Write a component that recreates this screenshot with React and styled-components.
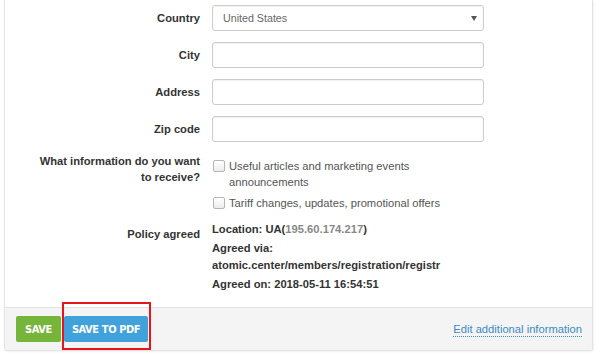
import styled, { createGlobalStyle } from 'styled-components';

const GlobalStyle = createGlobalStyle`
    body {
        margin: 0;
        background: #fff;
        font-family: "Liberation Sans", Arial, sans-serif;
        font-size: 11.2px;
        color: #333;
    }
`

export default function App() {
    return (
        <>
            <GlobalStyle />
            <Card>
                <Form>
                    <Row>
                        <Label>Country</Label>
                        <SelectBox>
                            <span>United States</span>
                            <Caret />
                        </SelectBox>
                    </Row>
                    <Row>
                        <Label>City</Label>
                        <Input />
                    </Row>
                    <Row>
                        <Label>Address</Label>
                        <Input />
                    </Row>
                    <Row>
                        <Label>Zip code</Label>
                        <Input />
                    </Row>

                    <Row top="3px">
                        <Label multi>What information do you want<br />to receive?</Label>
                        <Options>
                            <Option>
                                <Check />
                                <OptionText>Useful articles and marketing events announcements</OptionText>
                            </Option>
                            <Option>
                                <Check />
                                <OptionText>Tariff changes, updates, promotional offers</OptionText>
                            </Option>
                        </Options>
                    </Row>

                    <Row top="-1px">
                        <Label>Policy agreed</Label>
                        <Policy>
                            <p>Location: UA(<Ip>195.60.174.217</Ip>)</p>
                            <p>Agreed via:<br />atomic.center/members/registration/registr</p>
                            <p>Agreed on: 2018-05-11 16:54:51</p>
                        </Policy>
                    </Row>
                </Form>

                <Footer>
                    <Buttons>
                        <Button color="#76b43a">Save</Button>
                        <Highlight>
                            <Button color="#41a1da">Save to PDF</Button>
                        </Highlight>
                    </Buttons>
                    <EditLink href="#">Edit additional information</EditLink>
                </Footer>
            </Card>
        </>
    )
}

const Card = styled.div`
    margin: 0 7px 6px 4px;
    border: 1px solid #e3e3e3;
    border-top: none;
    border-radius: 0 0 3px 3px;
    box-shadow: 1px 1px 2px rgba(0, 0, 0, 0.06);
    background: #fff;
`

const Form = styled.div`
    display: flex;
    flex-direction: column;
    gap: 11px;
    padding: 5px 0 12px 0;
`

const Row = styled.div`
    display: grid;
    grid-template-columns: 195px 272px;
    column-gap: 12px;
    align-items: start;
    margin-top: ${(p) => p.top || 0};
`

const Label = styled.label`
    font-weight: bold;
    font-size: 11.2px;
    color: #333;
    text-align: right;
    line-height: ${(p) => (p.multi ? '16px' : '26px')};
    margin-top: ${(p) => (p.multi ? '-3px' : '0')};
    white-space: nowrap;
`

const Input = styled.div`
    height: 24px;
    border: 1px solid #ccc;
    border-radius: 3px;
    box-shadow: inset 0 1px 1px rgba(0, 0, 0, 0.06);
    background: #fff;
`

const SelectBox = styled(Input)`
    display: flex;
    align-items: center;
    justify-content: space-between;
    padding: 0 6px 0 10px;
    font-size: 10.7px;
    color: #666;
`

const Caret = styled.span`
    width: 0;
    height: 0;
    border-left: 3px solid transparent;
    border-right: 3px solid transparent;
    border-top: 5px solid #555;
`

const Options = styled.div`
    display: flex;
    flex-direction: column;
    gap: 3px;
`

const Option = styled.div`
    display: flex;
    align-items: flex-start;
    gap: 4px;
    font-size: 11.2px;
    color: #555;
    line-height: 16px;
    padding-top: 2px;
`

const OptionText = styled.span`
    width: 240px;
`

const Check = styled.div`
    flex: none;
    width: 10px;
    height: 10px;
    margin: 2px 0 0 1px;
    border: 1px solid #b5b5b5;
    border-radius: 2px;
    background: linear-gradient(#fff, #ececec);
`

const Policy = styled.div`
    font-weight: bold;
    font-size: 11.2px;
    color: #333;
    line-height: 17px;
    overflow: hidden;
    white-space: nowrap;

    p {
        margin: 0 0 2px 0;
    }
`

const Ip = styled.span`
    color: #888;
`

const Footer = styled.div`
    display: flex;
    align-items: center;
    justify-content: space-between;
    height: 42px;
    padding: 0 10px 0 11px;
    background: #f4f4f4;
    border-top: 1px solid #e3e3e3;
`

const Buttons = styled.div`
    display: flex;
    align-items: center;
    gap: 3px;
`

const Highlight = styled.div`
    position: relative;

    &::after {
        content: '';
        position: absolute;
        left: -2px;
        right: -3px;
        top: -14px;
        bottom: -8px;
        border: 2px solid #e8141c;
        pointer-events: none;
    }
`

const Button = styled.button`
    display: block;
    height: 26px;
    padding: 0 ${(p) => (p.children === 'Save' ? '9px' : '8px')};
    border: none;
    border-radius: 2px;
    background: ${(p) => p.color};
    color: #fff;
    font-family: "DejaVu Sans", sans-serif;
    font-stretch: condensed;
    font-weight: bold;
    font-size: 11px;
    letter-spacing: -0.4px;
    text-transform: uppercase;
`

const EditLink = styled.a`
    font-size: 11.2px;
    color: #3b8ac6;
    text-decoration: none;
    border-bottom: 1px dotted #3b8ac6;
    line-height: 14px;
    margin-top: 1px;
`
